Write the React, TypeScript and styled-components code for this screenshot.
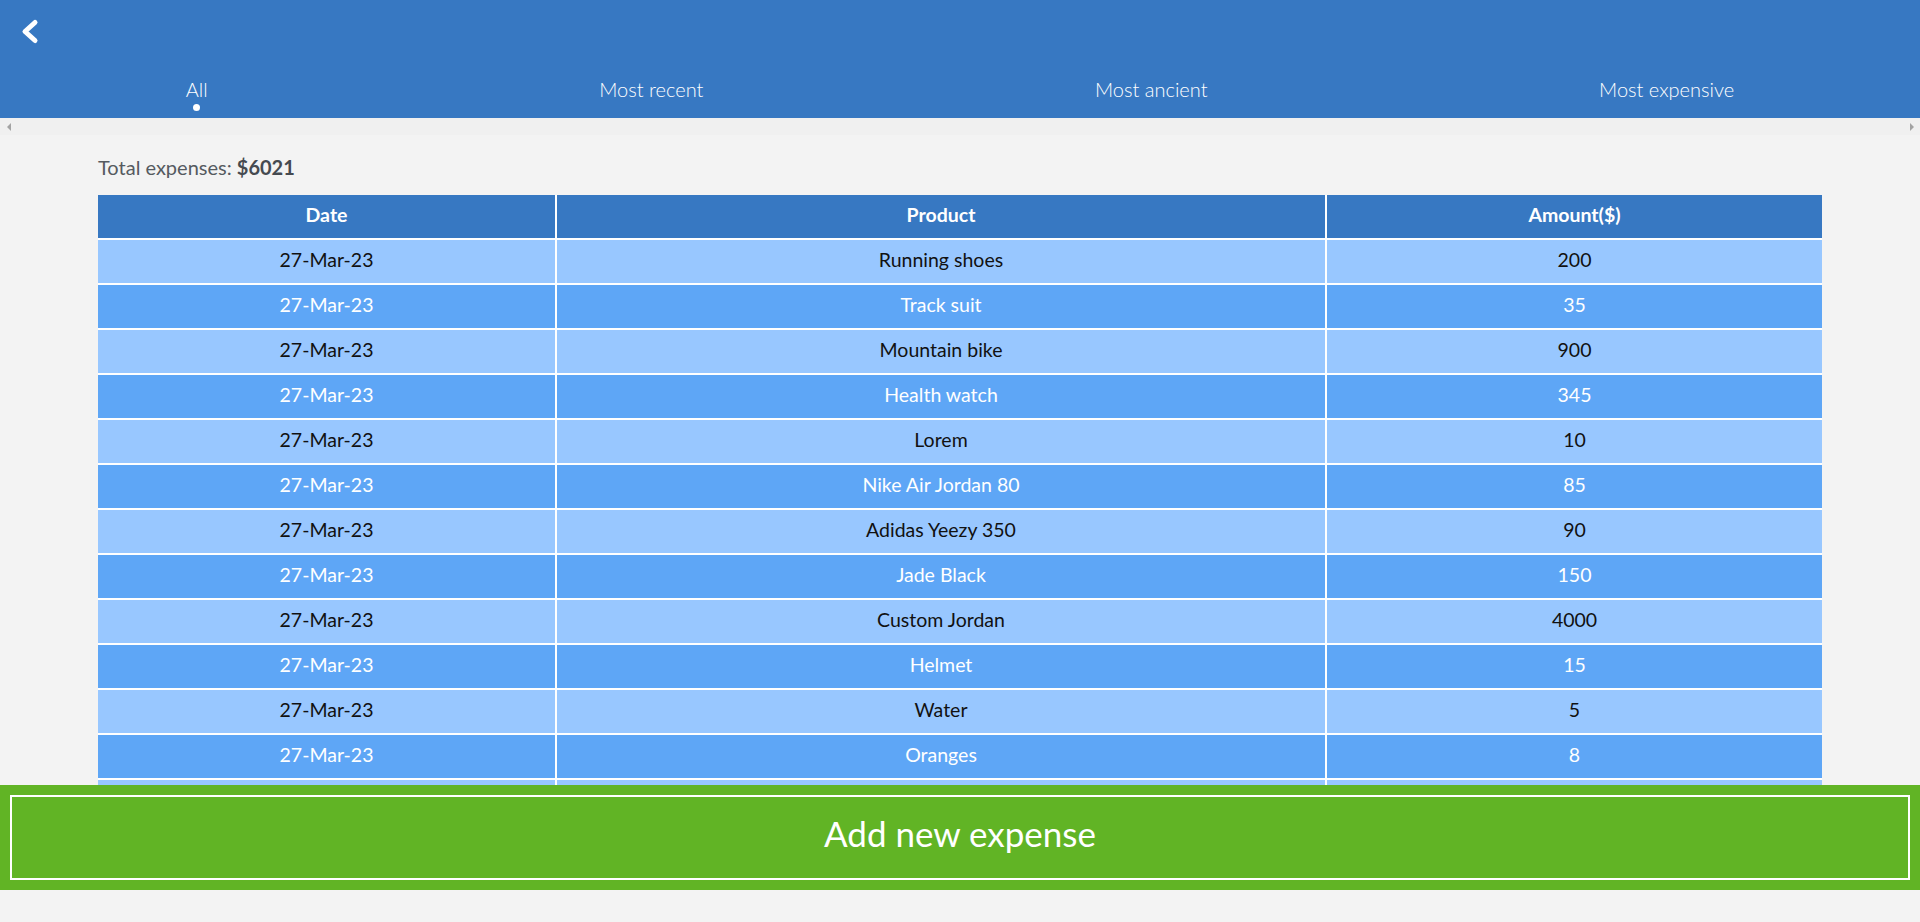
import React from "react";
import styled, { createGlobalStyle } from "styled-components";

const GlobalStyle = createGlobalStyle`
  html, body {
    margin: 0;
    padding: 0;
    background: #f3f3f3;
    font-family: "Lato", "Open Sans", "Liberation Sans", sans-serif;
    overflow: hidden;
  }
  * { box-sizing: border-box; }
`;

const Page = styled.div`
  height: 100vh;
  display: flex;
  flex-direction: column;
  background: #f3f3f3;
`;

const Header = styled.header`
  background: #3778c2;
  display: flex;
  flex-direction: column;
  height: 118px;
  flex: none;
  overflow: hidden;
`;

const TopBar = styled.div`
  height: 64px;
  display: flex;
  align-items: center;
  padding-left: 20px;
`;

const BackButton = styled.button`
  background: none;
  border: 0;
  padding: 0;
  margin: 0;
  display: flex;
  cursor: pointer;
`;

const Tabs = styled.nav`
  display: flex;
  height: 54px;
  margin: 0 -10px;
`;

const Tab = styled.div`
  flex: 1 1 auto;
  display: flex;
  flex-direction: column;
  align-items: center;
  padding-top: 14px;
`;

const TabLabel = styled.span`
  color: #fff;
  font-size: 20px;
  line-height: 22px;
  font-weight: 300;
  white-space: nowrap;
`;

const Dot = styled.span<{ $active: boolean }>`
  width: 7px;
  height: 7px;
  margin-top: 4px;
  border-radius: 50%;
  background: ${(p) => (p.$active ? "#fff" : "transparent")};
`;

const ScrollStrip = styled.div`
  height: 17px;
  flex: none;
  background: #f0f0f0;
  display: flex;
  justify-content: space-between;
  align-items: center;
`;

const ScrollArrow = styled.span<{ $dir: "left" | "right" }>`
  width: 17px;
  height: 17px;
  display: flex;
  align-items: center;
  justify-content: center;
  &::before {
    content: "";
    width: 0;
    height: 0;
    border-top: 4px solid transparent;
    border-bottom: 4px solid transparent;
    ${(p) =>
      p.$dir === "left"
        ? "border-right: 4px solid #a3a3a3;"
        : "border-left: 4px solid #a3a3a3;"}
  }
`;

const Content = styled.main`
  flex: 1 1 auto;
  min-height: 0;
  overflow: hidden;
  padding: 20px 98px 0;
`;

const Total = styled.p`
  margin: 0 0 16px;
  font-size: 20px;
  line-height: 24px;
  color: #555a60;
  font-weight: 400;
  strong {
    color: #454a50;
    font-weight: 700;
  }
`;

const Table = styled.div`
  display: flex;
  flex-direction: column;
  gap: 2px;
  background: #fff;
`;

const Row = styled.div`
  display: grid;
  grid-template-columns: 457px 768px 1fr;
  gap: 2px;
  height: 43px;
`;

type Variant = "head" | "light" | "dark";

const Cell = styled.div<{ $variant: Variant }>`
  display: flex;
  align-items: center;
  justify-content: center;
  padding-bottom: 4px;
  font-size: 19.5px;
  background: ${(p) =>
    p.$variant === "head" ? "#3778c2" : p.$variant === "light" ? "#98c7ff" : "#5ea6f6"};
  color: ${(p) => (p.$variant === "light" ? "#111" : "#fff")};
  font-weight: ${(p) => (p.$variant === "head" ? 700 : 400)};
`;

const Footer = styled.footer`
  flex: none;
  height: 105px;
  margin-bottom: 32px;
  background: #61b425;
  padding: 10px;
`;

const AddButton = styled.button`
  width: 100%;
  height: 100%;
  background: transparent;
  border: 2px solid #fff;
  padding: 0 0 9px;
  color: #fff;
  font-family: inherit;
  font-size: 35px;
  font-weight: 400;
  cursor: pointer;
`;

const tabs = ["All", "Most recent", "Most ancient", "Most expensive"];

const expenses: [string, string, number][] = [
  ["27-Mar-23", "Running shoes", 200],
  ["27-Mar-23", "Track suit", 35],
  ["27-Mar-23", "Mountain bike", 900],
  ["27-Mar-23", "Health watch", 345],
  ["27-Mar-23", "Lorem", 10],
  ["27-Mar-23", "Nike Air Jordan 80", 85],
  ["27-Mar-23", "Adidas Yeezy 350", 90],
  ["27-Mar-23", "Jade Black", 150],
  ["27-Mar-23", "Custom Jordan", 4000],
  ["27-Mar-23", "Helmet", 15],
  ["27-Mar-23", "Water", 5],
  ["27-Mar-23", "Oranges", 8],
  ["27-Mar-23", "Gloves", 25],
  ["27-Mar-23", "Socks", 12],
  ["27-Mar-23", "Energy bars", 20],
  ["27-Mar-23", "Backpack", 60],
  ["27-Mar-23", "Sunglasses", 61],
];

const BackIcon = () => (
  <svg width="20" height="28" viewBox="0 0 20 28" aria-hidden="true">
    <polyline
      points="15,4.5 5,13.5 15,22.5"
      fill="none"
      stroke="#fff"
      strokeWidth="5"
      strokeLinejoin="round"
      strokeLinecap="round"
    />
  </svg>
);

export default function App() {
  const total = expenses.reduce((s, e) => s + e[2], 0);
  return (
    <>
      <GlobalStyle />
      <Page>
        <Header>
          <TopBar>
            <BackButton aria-label="Back">
              <BackIcon />
            </BackButton>
          </TopBar>
          <Tabs>
            {tabs.map((t, i) => (
              <Tab key={t}>
                <TabLabel>{t}</TabLabel>
                <Dot $active={i === 0} />
              </Tab>
            ))}
          </Tabs>
        </Header>
        <ScrollStrip>
          <ScrollArrow $dir="left" />
          <ScrollArrow $dir="right" />
        </ScrollStrip>
        <Content>
          <Total>
            Total expenses: <strong>${total}</strong>
          </Total>
          <Table>
            <Row>
              <Cell $variant="head">Date</Cell>
              <Cell $variant="head">Product</Cell>
              <Cell $variant="head">Amount($)</Cell>
            </Row>
            {expenses.map(([d, p, a], i) => {
              const v: Variant = i % 2 === 0 ? "light" : "dark";
              return (
                <Row key={i}>
                  <Cell $variant={v}>{d}</Cell>
                  <Cell $variant={v}>{p}</Cell>
                  <Cell $variant={v}>{a}</Cell>
                </Row>
              );
            })}
          </Table>
        </Content>
        <Footer>
          <AddButton>Add new expense</AddButton>
        </Footer>
      </Page>
    </>
  );
}
